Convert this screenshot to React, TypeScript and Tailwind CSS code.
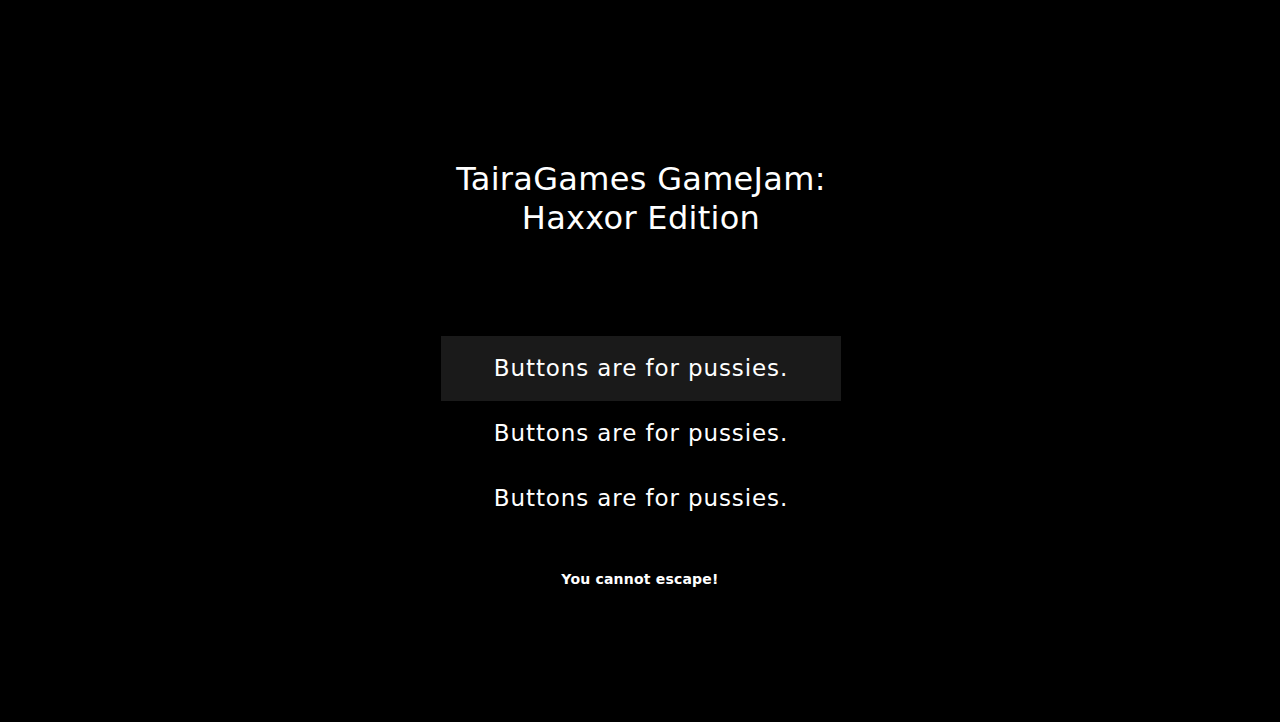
import React from "react";

const App: React.FC = () => {
  const items = ["Buttons are for pussies.", "Buttons are for pussies.", "Buttons are for pussies."];
  return (
    <div
      className="w-full h-[722px] bg-black text-white flex flex-col items-center"
      style={{ fontFamily: '"DejaVu Sans", sans-serif' }}
    >
      <h1 className="mt-[160px] ml-[2px] text-[32px] leading-[39px] text-center tracking-[0.3px]">
        TairaGames GameJam:
        <br />
        Haxxor Edition
      </h1>
      <div className="mt-[98px] ml-[2px] flex flex-col w-[400px]">
        {items.map((t, i) => (
          <div
            key={i}
            className={
              "h-[65px] flex items-center justify-center text-[23px] tracking-[0.9px] " +
              (i === 0 ? "bg-[#1a1a1a]" : "")
            }
          >
            {t}
          </div>
        ))}
      </div>
      <p className="mt-[38px] text-[14px] font-bold tracking-[0.2px]">You cannot escape!</p>
    </div>
  );
};

export default App;
